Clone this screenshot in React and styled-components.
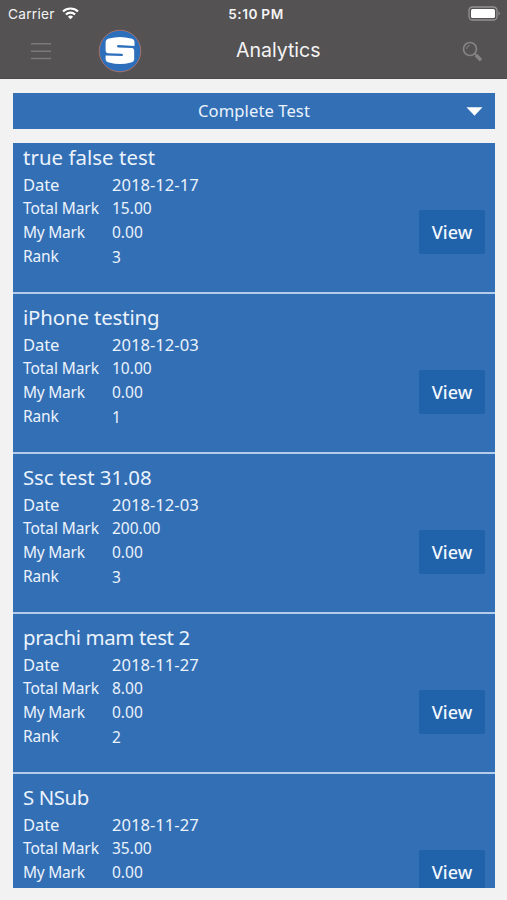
import React from "react";
import styled, { createGlobalStyle } from "styled-components";

const GlobalStyle = createGlobalStyle`
  *, *::before, *::after { box-sizing: border-box; }
  body { margin: 0; background: #f2f2f2; }
`;

const Screen = styled.div`
  display: flex;
  flex-direction: column;
  width: 507px;
  height: 900px;
  overflow: hidden;
  background: #f2f2f2;
  color: #ebf3fc;
  font-family: "Noto Sans", "Open Sans", sans-serif;
`;

const Header = styled.header`
  height: 79px;
  flex: none;
  background: #545253;
  border-bottom: 1px solid #4b494a;
  color: #f4f4f4;
  font-family: Inter, "Liberation Sans", sans-serif;
`;

const StatusBar = styled.div`
  display: grid;
  grid-template-columns: 1fr auto 1fr;
  align-items: center;
  height: 27px;
  padding: 0 6px 0 8px;
  line-height: 16px;
`;

const Carrier = styled.div`
  display: flex;
  align-items: center;
  gap: 7px;
  font-size: 13.7px;
  letter-spacing: 0.25px;
`;

const Clock = styled.div`
  font-size: 13.6px;
  font-weight: 600;
  letter-spacing: 0.6px;
  word-spacing: -0.8px;
  padding-left: 3px;
`;

const BatteryIcon = styled.svg`
  justify-self: end;
`;

const NavBar = styled.div`
  display: grid;
  grid-template-columns: 67px 74px 1fr 142px;
  align-items: center;
  height: 47px;
  padding-left: 31px;
`;

const Title = styled.h1`
  margin: -1px 0 0 64px;
  font-size: 19.5px;
  line-height: 24px;
  font-weight: 400;
`;

const SearchIcon = styled.svg`
  justify-self: end;
  margin: 2px 24px 0 0;
`;

const Content = styled.main`
  display: flex;
  flex-direction: column;
  gap: 14px;
  padding: 14px 12px 12px 13px;
  flex: 1;
  min-height: 0;
`;

const Picker = styled.div`
  display: grid;
  grid-template-columns: 1fr auto 1fr;
  align-items: center;
  height: 36px;
  flex: none;
  padding-right: 12px;
  background: #336fb5;
  font-size: 16.6px;
  line-height: 24px;

  span { grid-column: 2; padding-left: 12px; letter-spacing: 0.08px; }
  svg { justify-self: end; }
`;

const List = styled.div`
  flex: 1;
  min-height: 0;
  overflow: hidden;
  background: #336fb5;
`;

const Items = styled.div`
  margin-top: -9px;
`;

const Item = styled.article`
  display: flex;
  justify-content: space-between;
  height: 160px;
  padding: 9px 10px 0;
  border-bottom: 2px solid #b5cdea;
`;

const ItemTitle = styled.h2`
  margin: 0 0 2px;
  font-size: 20.4px;
  line-height: 28px;
  font-weight: 400;
  letter-spacing: ${(p) => p.$tracking}px;
  white-space: nowrap;
`;

const Field = styled.div`
  display: grid;
  grid-template-columns: 89px auto;
  height: ${(p) => p.$height}px;
  line-height: 24px;
  white-space: nowrap;
`;

const Label = styled.span`
  letter-spacing: ${(p) => p.$tracking}px;
  font-size: ${(p) => p.$size}px;
`;

const Value = styled.span`
  font-size: ${(p) => p.$size}px;
  padding-top: ${(p) => p.$drop}px;
`;

const ViewButton = styled.button`
  width: 66px;
  height: 44px;
  margin-top: 67px;
  padding: 0;
  border: 0;
  border-radius: 1px;
  background: #2063aa;
  color: #f2f8ff;
  font: 500 18px/44px "Noto Sans", "Open Sans", sans-serif;
`;

const FIELDS = [
  { key: "date", label: "Date", height: 23, size: 16.6, valueSize: 16.6, tracking: -0.1, drop: 0 },
  { key: "total", label: "Total Mark", height: 24, size: 15.5, valueSize: 15.5, tracking: -0.08, drop: 0 },
  { key: "mine", label: "My Mark", height: 24, size: 15.5, valueSize: 15.5, tracking: -0.25, drop: 0 },
  { key: "rank", label: "Rank", height: 24, size: 15.5, valueSize: 15.5, tracking: -0.15, drop: 1 },
];

const TESTS = [
  { name: "true false test", date: "2018-12-17", total: "15.00", mine: "0.00", rank: "3", tracking: 0.05 },
  { name: "iPhone testing", date: "2018-12-03", total: "10.00", mine: "0.00", rank: "1", tracking: -0.14 },
  { name: "Ssc test 31.08", date: "2018-12-03", total: "200.00", mine: "0.00", rank: "3", tracking: -0.07 },
  { name: "prachi mam test 2", date: "2018-11-27", total: "8.00", mine: "0.00", rank: "2", tracking: -0.35 },
  { name: "S NSub", date: "2018-11-27", total: "35.00", mine: "0.00", tracking: -0.4 },
];

function Wifi() {
  return (
    <svg width="17" height="13" viewBox="0 0 17 13" fill="none" stroke="#fff" strokeWidth="2.1">
      <path d="M1 4.6a10.8 10.8 0 0 1 15 0" />
      <path d="M3.9 7.5a6.6 6.6 0 0 1 9.2 0" />
      <path d="M8.5 12.3 5.9 9.7a3.8 3.8 0 0 1 5.2 0Z" fill="#fff" stroke="none" />
    </svg>
  );
}

function Logo() {
  return (
    <svg width="44" height="44" viewBox="0 0 44 44">
      <circle cx="22" cy="22" r="20.8" fill="#2d6fbb" stroke="#a66f68" />
      <path
        fill="#fff"
        d="M11 9.6Q22 6.4 33 9.6Q36.5 10.6 36.5 13V17L20.5 16Q19 16 19 17.2T20.5 18.4L34 19Q36.2 19.2 36.2 21.4V30.2Q36.2 32.6 33 33.5Q22 36.6 11 33.5Q7.6 32.6 7.6 30V26.4L23.5 27Q25 27 25 25.9T23.5 24.7L10 24.2Q7.6 24 7.6 21.8V13.2Q7.6 10.6 11 9.6Z"
      />
    </svg>
  );
}

export default function App() {
  return (
    <Screen>
      <GlobalStyle />
      <Header>
        <StatusBar>
          <Carrier>Carrier <Wifi /></Carrier>
          <Clock>5:10 PM</Clock>
          <BatteryIcon width="33" height="16" viewBox="0 0 33 16">
            <rect x="1" y="1" width="28" height="13" rx="3.5" fill="none" stroke="#949293" strokeWidth="1.3" />
            <rect x="3" y="3" width="24" height="9" rx="1.6" fill="#fff" />
            <path d="M30.5 5.3q2.6 2.2 0 4.4Z" fill="#949293" />
          </BatteryIcon>
        </StatusBar>
        <NavBar>
          <svg width="20" height="18" viewBox="0 0 20 18" stroke="#7b797a" strokeWidth="1.5">
            <path d="M0 1.8h20M0 9.2h20M0 16.4h20" />
          </svg>
          <Logo />
          <Title>Analytics</Title>
          <SearchIcon width="21" height="21" viewBox="0 0 21 21" fill="none" stroke="#858384">
            <circle cx="8" cy="8" r="6.5" strokeWidth="1.7" />
            <path d="M4.5 8A3.5 3.5 0 0 1 8 4.5" strokeWidth="1" />
            <path d="m12.8 12.8 1.4 1.4" strokeWidth="1.5" />
            <path d="m14 14 5 5.2" strokeWidth="3.5" />
          </SearchIcon>
        </NavBar>
      </Header>
      <Content>
        <Picker>
          <span>Complete Test</span>
          <svg width="17" height="9" viewBox="0 0 17 9"><path d="M.5.3h16L8.5 8.7Z" fill="#fff" /></svg>
        </Picker>
        <List>
          <Items>
            {TESTS.map((test) => (
              <Item key={test.name}>
                <div>
                  <ItemTitle $tracking={test.tracking}>{test.name}</ItemTitle>
                  {FIELDS.filter((f) => test[f.key]).map((f) => (
                    <Field key={f.key} $height={f.height}>
                      <Label $size={f.size} $tracking={f.tracking}>{f.label}</Label>
                      <Value $size={f.valueSize} $drop={f.drop}>{test[f.key]}</Value>
                    </Field>
                  ))}
                </div>
                <ViewButton>View</ViewButton>
              </Item>
            ))}
          </Items>
        </List>
      </Content>
    </Screen>
  );
}
